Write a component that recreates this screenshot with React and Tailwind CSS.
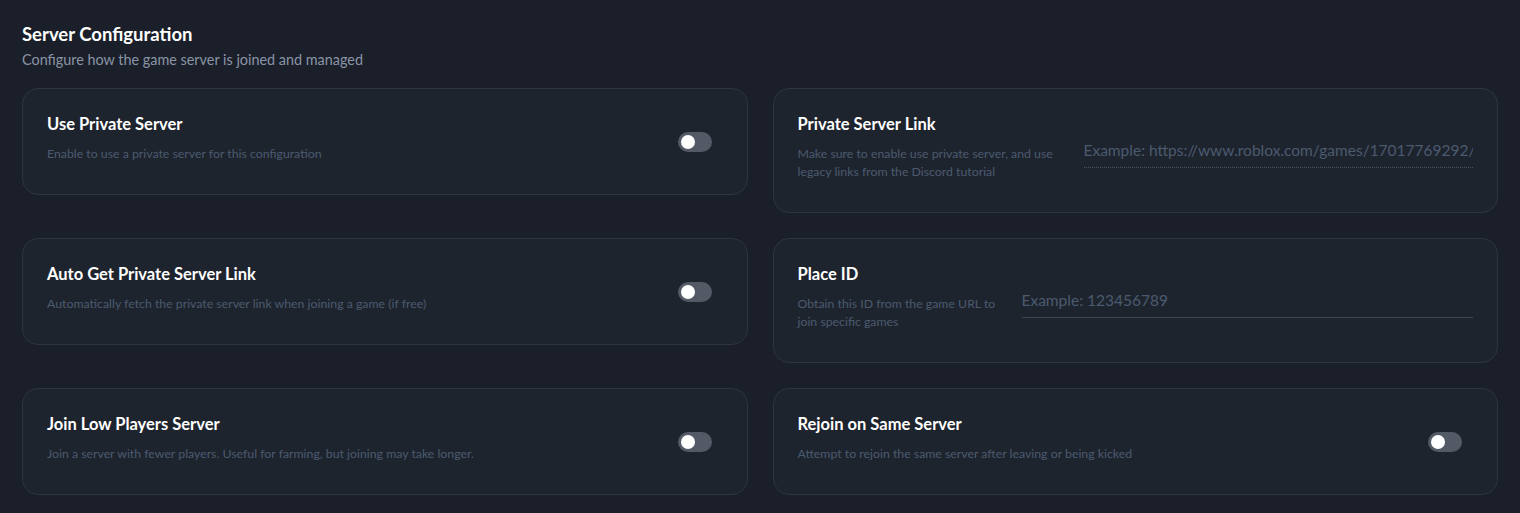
import React, { useState } from 'react'

const font = { fontFamily: 'Lato, "Noto Sans", sans-serif' }

function Toggle({ on, onChange }) {
  return (
    <button
      onClick={() => onChange(!on)}
      className={`relative h-5 w-[34px] shrink-0 rounded-full transition-colors ${on ? 'bg-[#3b82f6]' : 'bg-[#535a65]'}`}
    >
      <span
        className={`absolute top-[3px] h-[14px] w-[14px] rounded-full bg-white transition-all ${on ? 'left-[17px]' : 'left-[3px]'}`}
      />
    </button>
  )
}

function ToggleCard({ title, desc }) {
  const [on, setOn] = useState(false)
  return (
    <div className="flex h-[107px] items-center justify-between rounded-2xl border border-[#2e3440] bg-[#1e242e] pl-6 pr-[35px]">
      <div className="-mt-[8px]">
        <h3 className="text-[16.5px] font-bold leading-6 text-white">{title}</h3>
        <p className="mt-[9px] text-[12.3px] leading-[18px] text-[#4b5a6f]">{desc}</p>
      </div>
      <Toggle on={on} onChange={setOn} />
    </div>
  )
}

function InputCard({ title, desc, placeholder, textWidth, dotted }) {
  const [val, setVal] = useState('')
  return (
    <div className="flex h-[125px] items-start gap-6 rounded-2xl border border-[#2e3440] bg-[#1e242e] px-6 pt-[23px]">
      <div className="shrink-0" style={{ width: textWidth }}>
        <h3 className="text-[16.5px] font-bold leading-6 text-white">{title}</h3>
        <p className="mt-[9px] text-[12.3px] leading-[18px] text-[#4b5a6f]">{desc}</p>
      </div>
      <input
        value={val}
        onChange={(e) => setVal(e.target.value)}
        placeholder={placeholder}
        style={font}
        className={`mt-[20px] h-9 min-w-0 flex-1 border-b bg-transparent text-[15.5px] text-white outline-none placeholder:text-[#4b5a6f] ${dotted ? 'border-dotted border-[#4a5260]' : 'border-solid border-[#3d4552]'}`}
      />
    </div>
  )
}

export default function App() {
  return (
    <div className="min-h-screen bg-[#1a1f29] px-[22px] pt-5 pb-6" style={font}>
      <h2 className="text-[18.5px] font-bold leading-7 text-white">Server Configuration</h2>
      <p className="mt-0.5 text-[14.4px] leading-5 text-[#8a94a6]">Configure how the game server is joined and managed</p>

      <div className="mt-[18px] grid grid-cols-2 items-start gap-[25px]">
        <ToggleCard title="Use Private Server" desc="Enable to use a private server for this configuration" />
        <InputCard
          title="Private Server Link"
          desc="Make sure to enable use private server, and use legacy links from the Discord tutorial"
          placeholder="Example: https://www.roblox.com/games/17017769292/Anime-Defenders"
          textWidth={262}
          dotted
        />
        <ToggleCard title="Auto Get Private Server Link" desc="Automatically fetch the private server link when joining a game (if free)" />
        <InputCard
          title="Place ID"
          desc="Obtain this ID from the game URL to join specific games"
          placeholder="Example: 123456789"
          textWidth={200}
        />
        <ToggleCard title="Join Low Players Server" desc="Join a server with fewer players. Useful for farming, but joining may take longer." />
        <ToggleCard title="Rejoin on Same Server" desc="Attempt to rejoin the same server after leaving or being kicked" />
      </div>
    </div>
  )
}
